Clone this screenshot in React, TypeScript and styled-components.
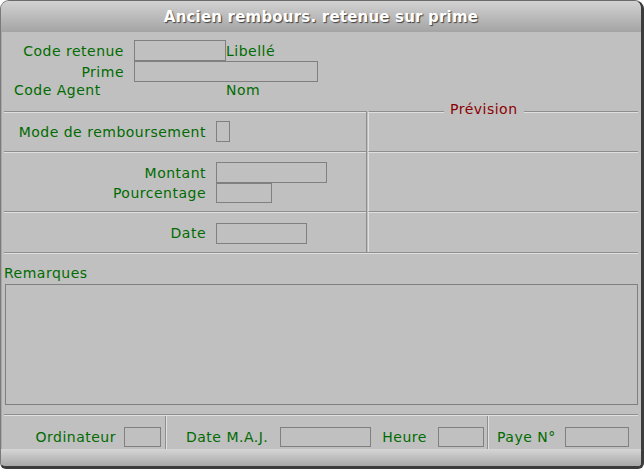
import React from "react";
import styled, { createGlobalStyle } from "styled-components";

const Global = createGlobalStyle`
  html, body { margin: 0; padding: 0; background: #ffffff; }
  body { font-family: "DejaVu Sans", Verdana, sans-serif; }
`;

const green = "#006b00";
const dark = "#8e8e8e";
const light = "#e0e0e0";

const Window = styled.div`
  box-sizing: border-box;
  width: 644px;
  height: 469px;
  background: #c0c0c0;
  border-radius: 9px 9px 6px 6px;
  border-top: 1px solid #6a6a6a;
  border-left: 1px solid #7a7a7a;
  border-right: 3px solid #3c3c3c;
  border-bottom: 3px solid #3c3c3c;
  overflow: hidden;
  display: flex;
  flex-direction: column;
`;

const TitleBar = styled.div`
  height: 31px;
  flex: none;
  background: linear-gradient(#d2d2d2, #a4a4a4);
  display: flex;
  align-items: center;
  justify-content: center;
  color: #ffffff;
  font-weight: bold;
  font-size: 15px;
  letter-spacing: 0.2px;
  text-shadow: 1px 1px 1px #404040;
`;

const Body = styled.div`
  flex: 1;
  display: flex;
  flex-direction: column;
  padding: 0 0 0 2px;
  border-left: 1px solid #a8a8a8;
`;

const Text = styled.span<{ $color?: string }>`
  font-size: 14px;
  letter-spacing: 0.5px;
  color: ${(p) => p.$color || green};
  white-space: nowrap;
  line-height: 16px;
`;

const Field = styled.div<{ $w: number; $h?: number }>`
  box-sizing: border-box;
  width: ${(p) => p.$w}px;
  height: ${(p) => p.$h ?? 21}px;
  border: 1px solid #808080;
  flex: none;
`;

const Header = styled.div`
  height: 79px;
  padding-top: 8px;
  box-sizing: border-box;
  display: flex;
  flex-direction: column;
`;

const HRow = styled.div<{ $h: number }>`
  height: ${(p) => p.$h}px;
  display: flex;
  align-items: center;
`;

const HLabel = styled(Text)`
  width: 120px;
  text-align: right;
  margin-right: 10px;
`;

const AgentLabel = styled(Text)`
  width: 212px;
  margin-left: 10px;
`;

const Grid = styled.div`
  position: relative;
  display: grid;
  grid-template-columns: 363px 1fr;
  grid-template-rows: 40px 60px 41px;
  margin-right: 3px;
`;

const Legend = styled.div`
  position: absolute;
  left: 440px;
  top: -12px;
  padding: 0 6px;
  background: #c0c0c0;
`;

const LeftCell = styled.div<{ $pt?: number }>`
  border-top: 1px solid ${dark};
  box-shadow: inset 0 1px 0 ${light};
  border-right: 1px solid ${dark};
  display: flex;
  flex-direction: column;
  justify-content: center;
  padding-top: ${(p) => p.$pt ?? 0}px;
`;

const RightCell = styled.div`
  border-top: 1px solid ${dark};
  box-shadow: inset 0 1px 0 ${light};
  border-left: 1px solid ${light};
  margin-left: 1px;
`;

const CellRow = styled.div`
  display: flex;
  align-items: center;
  height: 20px;
`;

const CellLabel = styled(Text)`
  width: 202px;
  text-align: right;
  margin-right: 10px;
`;

const Groove = styled.div`
  flex: none;
  border-top: 1px solid ${dark};
  border-bottom: 1px solid ${light};
  margin-right: 3px;
`;

const Remarks = styled.div`
  display: flex;
  flex-direction: column;
  padding: 11px 3px 0 0;
`;

const RemarksArea = styled.div`
  box-sizing: border-box;
  height: 121px;
  border: 1px solid #808080;
  margin: 3px 0 9px 1px;
`;

const Footer = styled.div`
  margin-right: 3px;
  display: grid;
  grid-template-columns: 163px 322px 1fr;
  height: 33px;
`;

const FootCell = styled.div<{ $align?: string; $pl?: number; $pr?: number; $last?: boolean }>`
  display: flex;
  align-items: center;
  justify-content: ${(p) => p.$align || "flex-start"};
  padding: 8px ${(p) => p.$pr ?? 0}px 0 ${(p) => p.$pl ?? 0}px;
  border-right: ${(p) => (p.$last ? "none" : `1px solid ${dark}`)};
  box-shadow: ${(p) => (p.$last ? "none" : `1px 0 0 ${light}`)};
  margin-right: ${(p) => (p.$last ? 0 : 1)}px;
`;

const FootLabel = styled(Text)<{ $ml?: number; $mr?: number }>`
  margin-left: ${(p) => p.$ml ?? 0}px;
  margin-right: ${(p) => p.$mr ?? 8}px;
`;

const BottomBar = styled.div`
  flex: 1;
  background: linear-gradient(#d6d6d6, #a8a8a8);
  margin-left: -3px;
`;

export default function App() {
  return (
    <>
      <Global />
      <Window>
        <TitleBar>Ancien rembours. retenue sur prime</TitleBar>
        <Body>
          <Header>
            <HRow $h={21}>
              <HLabel>Code retenue</HLabel>
              <Field $w={92} />
              <Text>Libellé</Text>
            </HRow>
            <HRow $h={21}>
              <HLabel>Prime</HLabel>
              <Field $w={184} />
            </HRow>
            <HRow $h={16}>
              <AgentLabel>Code Agent</AgentLabel>
              <Text>Nom</Text>
            </HRow>
          </Header>
          <Grid>
            <Legend>
              <Text $color="#8b0000">Prévision</Text>
            </Legend>
            <LeftCell>
              <CellRow>
                <CellLabel>Mode de remboursement</CellLabel>
                <Field $w={14} />
              </CellRow>
            </LeftCell>
            <RightCell />
            <LeftCell $pt={2}>
              <CellRow>
                <CellLabel>Montant</CellLabel>
                <Field $w={111} />
              </CellRow>
              <CellRow>
                <CellLabel>Pourcentage</CellLabel>
                <Field $w={56} $h={20} />
              </CellRow>
            </LeftCell>
            <RightCell />
            <LeftCell $pt={2}>
              <CellRow>
                <CellLabel>Date</CellLabel>
                <Field $w={91} />
              </CellRow>
            </LeftCell>
            <RightCell />
          </Grid>
          <Groove />
          <Remarks>
            <Text>Remarques</Text>
            <RemarksArea />
          </Remarks>
          <Groove />
          <Footer>
            <FootCell $align="flex-end" $pr={4}>
              <FootLabel>Ordinateur</FootLabel>
              <Field $w={37} $h={20} />
            </FootCell>
            <FootCell $pl={19}>
              <FootLabel $mr={12}>Date M.A.J.</FootLabel>
              <Field $w={91} $h={20} />
              <FootLabel $ml={11} $mr={11}>Heure</FootLabel>
              <Field $w={46} $h={20} />
            </FootCell>
            <FootCell $pl={8} $last>
              <FootLabel $mr={9}>Paye N°</FootLabel>
              <Field $w={64} $h={20} />
            </FootCell>
          </Footer>
          <BottomBar />
        </Body>
      </Window>
    </>
  );
}
